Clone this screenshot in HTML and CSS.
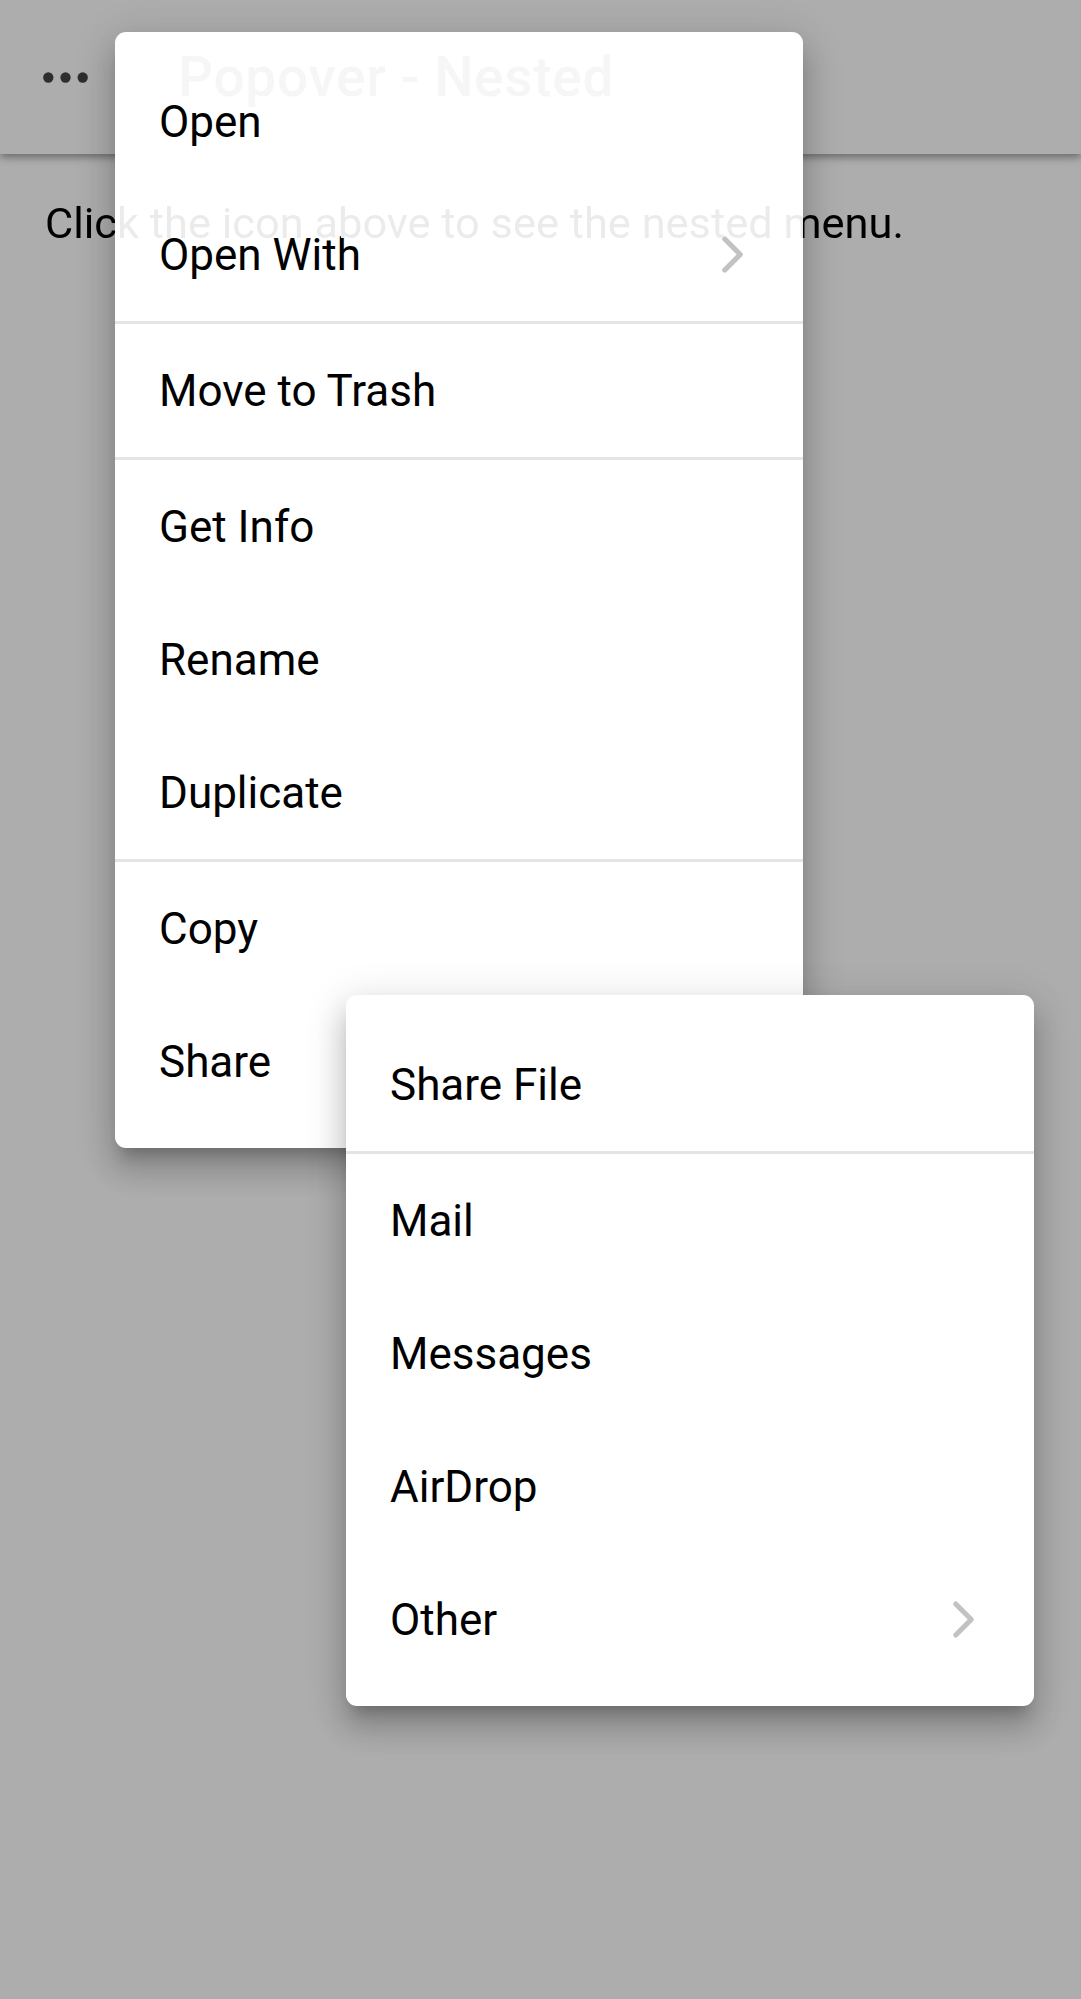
FILE: index.html
```html
<!DOCTYPE html>
<html lang="en">
<head>
<meta charset="utf-8">
<title>Popover - Nested</title>
<link rel="stylesheet" href="styles.css">
</head>
<body>
  <div class="app">
    <header class="toolbar">
      <button class="menu-btn" aria-label="More">
        <svg class="ellipsis" viewBox="0 0 512 512" width="55" height="55">
          <circle cx="96" cy="256" r="48"/>
          <circle cx="256" cy="256" r="48"/>
          <circle cx="416" cy="256" r="48"/>
        </svg>
      </button>
      <div class="title">Popover - Nested</div>
    </header>
    <main class="content">
      <p class="hint">Click the icon above to see the nested menu.</p>
    </main>
  </div>

  <div class="backdrop"></div>

  <div class="popover popover-main">
    <div class="group">
      <div class="item"><span class="label">Open</span></div>
      <div class="item"><span class="label">Open With</span>
        <svg class="chev" viewBox="0 0 512 512" width="55" height="55"><polyline points="184,112 328,256 184,400"/></svg>
      </div>
    </div>
    <div class="group">
      <div class="item"><span class="label">Move to Trash</span></div>
    </div>
    <div class="group">
      <div class="item"><span class="label">Get Info</span></div>
      <div class="item"><span class="label">Rename</span></div>
      <div class="item"><span class="label">Duplicate</span></div>
    </div>
    <div class="group">
      <div class="item"><span class="label">Copy</span></div>
      <div class="item"><span class="label">Share</span></div>
    </div>
  </div>

  <div class="popover popover-sub">
    <div class="group">
      <div class="item"><span class="label">Share File</span></div>
    </div>
    <div class="group">
      <div class="item"><span class="label">Mail</span></div>
      <div class="item"><span class="label">Messages</span></div>
      <div class="item"><span class="label">AirDrop</span></div>
      <div class="item"><span class="label">Other</span>
        <svg class="chev" viewBox="0 0 512 512" width="55" height="55"><polyline points="184,112 328,256 184,400"/></svg>
      </div>
    </div>
  </div>
</body>
</html>
```

FILE: styles.css
```css
html, body {
  margin: 0;
  padding: 0;
}

body {
  width: 1081px;
  height: 1999px;
  overflow: hidden;
  background: #ffffff;
  font-family: Roboto, "Noto Sans", Arial, sans-serif;
  color: #000000;
  position: relative;
}

.app {
  display: flex;
  flex-direction: column;
  height: 100%;
}

.toolbar {
  height: 154px;
  flex: 0 0 154px;
  display: flex;
  align-items: center;
  background: #ffffff;
  box-shadow: 0 3px 6px -1px rgba(0,0,0,0.2), 0 5px 7px 0 rgba(0,0,0,0.14), 0 1px 14px 0 rgba(0,0,0,0.12);
  position: relative;
}

.menu-btn {
  border: 0;
  background: transparent;
  padding: 0;
  margin: 0 0 0 38px;
  width: 55px;
  height: 55px;
  display: flex;
}

.ellipsis {
  fill: #444444;
}

.title {
  position: relative;
  z-index: 5;
  margin-left: 85px;
  font-size: 55px;
  font-weight: 500;
  letter-spacing: 0.0125em;
  color: #f6f6f6;
}

.content {
  flex: 1;
  padding: 44px 45px;
}

.hint {
  position: relative;
  z-index: 5;
  margin: 0;
  font-size: 43.4px;
  line-height: normal;
  color: transparent;
  background: linear-gradient(to right, #000000 70px, #ebebeb 70px, #ebebeb 758px, #000000 758px);
  -webkit-background-clip: text;
  background-clip: text;
}

.backdrop {
  position: absolute;
  inset: 0;
  background: rgba(0,0,0,0.32);
  z-index: 2;
}

.popover {
  position: absolute;
  width: 688px;
  border-radius: 11px;
  background: #ffffff;
  box-shadow: 0 14px 14px -8px rgba(0,0,0,0.2), 0 22px 28px 3px rgba(0,0,0,0.14), 0 8px 38px 6px rgba(0,0,0,0.12);
  padding: 23px 0 20px;
  z-index: 3;
}

.popover-main {
  left: 115px;
  top: 32px;
}

.popover-sub {
  left: 346px;
  top: 995px;
  z-index: 4;
}

.group + .group {
  border-top: 3px solid #e4e4e4;
}

.item {
  height: 133px;
  display: flex;
  align-items: center;
  padding: 0 43px 0 44px;
  font-size: 44px;
}

.label {
  line-height: normal;
}

.chev {
  margin-left: auto;
  fill: none;
  stroke: #c2c2c2;
  stroke-width: 48;
  stroke-linecap: round;
  stroke-linejoin: round;
}
```
